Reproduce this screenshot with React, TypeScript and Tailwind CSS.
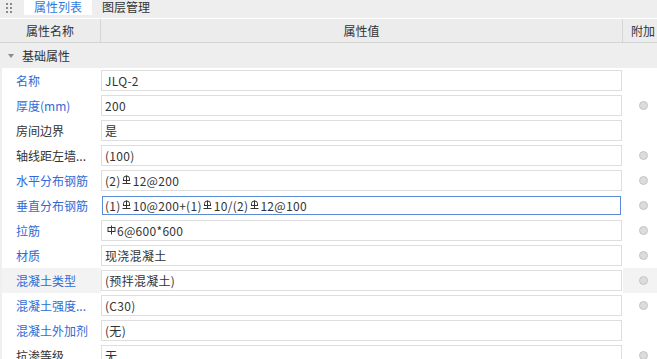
import React from "react";

const G3 = () => (
  <span className="inline-flex w-[12px] justify-center items-start self-start mt-[4px]">
    <svg width="9" height="10" viewBox="0 0 9 10" fill="none" stroke="#333" strokeWidth="1">
      <path d="M4.5 0.5 V9" />
      <path d="M1.5 5.5 V3.5 A3 2.5 0 0 1 7.5 3.5 V5.5" />
      <path d="M1 5.5 H8" />
      <path d="M0.5 8.5 H8.5" />
    </svg>
  </span>
);

const G1 = () => (
  <span className="inline-flex w-[12px] justify-center items-start self-start mt-[4px]">
    <svg width="9" height="10" viewBox="0 0 9 10" fill="none" stroke="#333" strokeWidth="1">
      <path d="M4.5 0.5 V9.5" />
      <rect x="1" y="2.5" width="7" height="4" />
    </svg>
  </span>
);

type Row = {
  label: string;
  blue?: boolean;
  value: React.ReactNode;
  dot?: boolean;
  focus?: boolean;
  hl?: boolean;
};

const rows: Row[] = [
  { label: "名称", blue: true, value: "JLQ-2" },
  { label: "厚度(mm)", blue: true, value: "200", dot: true },
  { label: "房间边界", value: "是" },
  { label: "轴线距左墙...", value: "(100)", dot: true },
  { label: "水平分布钢筋", blue: true, value: <>(2)<G3 />12@200</>, dot: true },
  {
    label: "垂直分布钢筋",
    blue: true,
    value: <>(1)<G3 />10@200+(1)<G3 />10/(2)<G3 />12@100</>,
    dot: true,
    focus: true,
  },
  { label: "拉筋", blue: true, value: <><G1 />6@600*600</>, dot: true },
  { label: "材质", blue: true, value: "现浇混凝土", dot: true },
  { label: "混凝土类型", blue: true, value: "(预拌混凝土)", dot: true, hl: true },
  { label: "混凝土强度...", blue: true, value: "(C30)", dot: true },
  { label: "混凝土外加剂", blue: true, value: "(无)" },
  { label: "抗渗等级", value: "无", dot: true },
];

const boxNormal =
  "h-[21px] bg-white border border-solid border-[#dedede] flex items-center pl-[3px] whitespace-nowrap leading-none tracking-[0.3px]";
const boxFocus =
  "h-[21px] bg-white border border-solid border-transparent ring-1 ring-inset ring-[#5b8bd6] flex items-center pl-[3px] whitespace-nowrap leading-none tracking-[0.3px]";

export default function App() {
  return (
    <div
      className="w-[657px] h-[359px] overflow-hidden bg-white text-[12px] text-[#333]"
      style={{ fontFamily: '"Noto Sans CJK SC", "Noto Sans", sans-serif' }}
    >
      {/* tab bar */}
      <div className="h-[18px] bg-[#eeeeef] flex items-stretch">
        <div className="w-[24px] grid grid-cols-2 gap-x-[3px] gap-y-[2px] content-center pl-[6px] pr-[13px] -mt-[3px]">
          {Array.from({ length: 6 }).map((_, i) => (
            <div key={i} className="w-[2px] h-[2px] bg-[#8a8a8a]" />
          ))}
        </div>
        <div className="w-[68px] bg-white text-[#2f7bdc] flex items-center justify-center leading-none -mt-[2px] pt-[1px] h-[17px]">
          属性列表
        </div>
        <div className="w-[68px] flex items-center justify-center leading-none -mt-[2px] pt-[1px] h-[17px]">
          图层管理
        </div>
      </div>
      {/* header */}
      <div className="h-[25px] bg-[#ececec] border-t border-white border-b border-b-[#d4d4d4] flex items-stretch">
        <div className="w-[101px] border-r border-[#d6d6d6] flex items-center justify-center">属性名称</div>
        <div className="w-[522px] border-r border-[#d6d6d6] flex items-center justify-center">属性值</div>
        <div className="flex-1 flex items-center pl-[8px] whitespace-nowrap">附加</div>
      </div>
      {/* section */}
      <div className="h-[25px] bg-[#eeeeee] flex items-center">
        <svg width="6" height="4" viewBox="0 0 6 4" className="ml-[8px] mr-[8px]">
          <path d="M0 0 H6 L3 4 Z" fill="#8c8c8c" />
        </svg>
        <span>基础属性</span>
      </div>
      {/* rows */}
      <div className="border-l-2 border-[#efefef]">
        {rows.map((r, i) => (
          <div key={i} className="h-[25px] flex items-stretch">
            <div
              className={`w-[99px] pl-[14px] flex items-center whitespace-nowrap ${r.blue ? "text-[#2f6ad6]" : "text-[#333]"} ${r.hl ? "bg-[#f3f3f3]" : ""}`}
            >
              {r.label}
            </div>
            <div className="w-[522px] py-[2px] pr-[1px]">
              <div className={r.focus ? boxFocus : boxNormal}>{r.value}</div>
            </div>
            <div className={`flex-1 flex items-center pl-[16px] ${r.hl ? "bg-[#f3f3f3]" : ""}`}>
              {r.dot && (
                <div className="w-[9px] h-[9px] rounded-full bg-[#dcdcdc] border border-[#c4c4c4]" />
              )}
            </div>
          </div>
        ))}
      </div>
    </div>
  );
}
